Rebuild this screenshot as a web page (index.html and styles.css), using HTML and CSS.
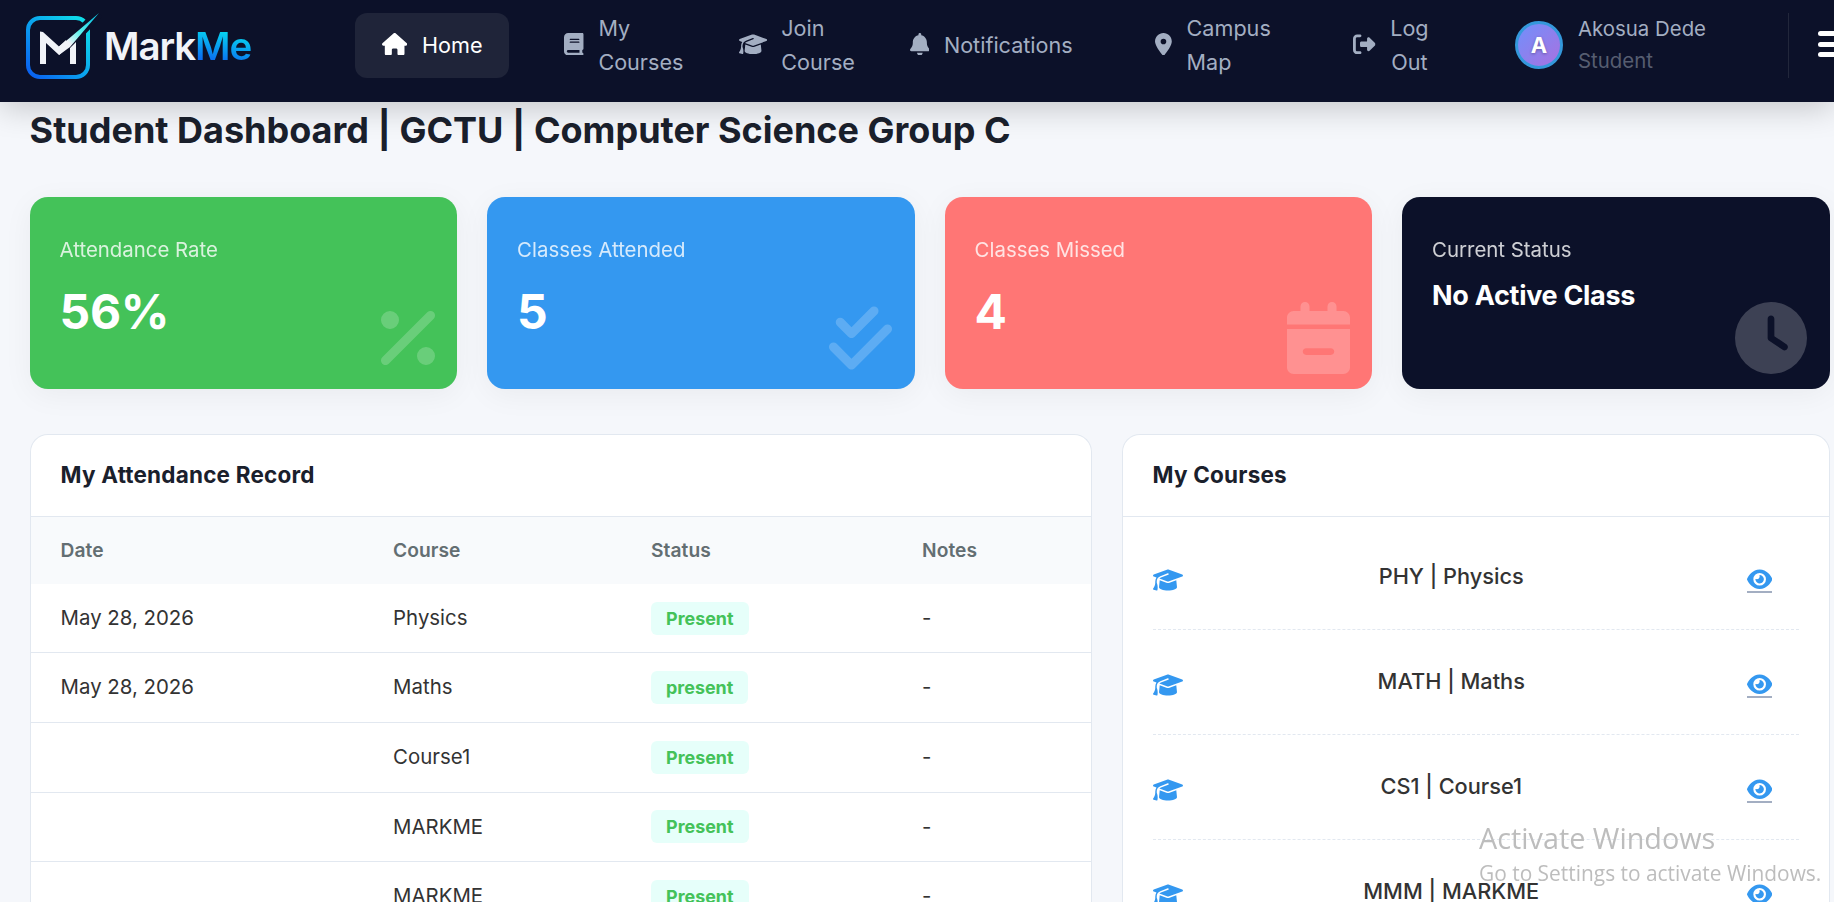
FILE: index.html
```html
<!DOCTYPE html>
<html lang="en">
<head>
<meta charset="utf-8">
<title>MarkMe | Student Dashboard</title>
<link rel="stylesheet" href="styles.css">
</head>
<body>
<svg class="sprite" aria-hidden="true">
  <symbol id="house" viewBox="0 0 576 512"><path d="M575.8 255.5c0 18-15 32.1-32 32.1h-32l.7 160.2c0 2.7-.2 5.4-.5 8.1V472c0 22.1-17.9 40-40 40H456c-1.1 0-2.2 0-3.3-.1c-1.4 .1-2.8 .1-4.2 .1H416 392c-22.1 0-40-17.9-40-40V448 384c0-17.7-14.3-32-32-32H256c-17.7 0-32 14.3-32 32v64 24c0 22.1-17.9 40-40 40H160 128.1c-1.5 0-3-.1-4.5-.2c-1.2 .1-2.4 .2-3.6 .2H104c-22.1 0-40-17.9-40-40V360c0-.9 0-1.9 .1-2.8V287.6H32c-18 0-32-14-32-32.1c0-9 3-17 10-24L266.4 8c7-7 15-8 22-8s15 2 21 7L564.8 231.5c8 7 12 15 11 24z"/></symbol>
  <symbol id="book" viewBox="0 0 448 512"><path d="M96 0C43 0 0 43 0 96V416c0 53 43 96 96 96H384h32c17.7 0 32-14.3 32-32s-14.3-32-32-32V384c17.7 0 32-14.3 32-32V32c0-17.7-14.3-32-32-32H384 96zm0 384H352v64H96c-17.7 0-32-14.3-32-32s14.3-32 32-32zm32-240c0-8.8 7.2-16 16-16H336c8.8 0 16 7.2 16 16s-7.2 16-16 16H144c-8.8 0-16-7.2-16-16zm16 48H336c8.8 0 16 7.2 16 16s-7.2 16-16 16H144c-8.8 0-16-7.2-16-16s7.2-16 16-16z"/></symbol>
  <symbol id="cap" viewBox="0 0 640 512"><path d="M320 32c-8.1 0-16.1 1.4-23.7 4.1L15.8 137.4C6.3 140.9 0 149.9 0 160s6.3 19.1 15.8 22.6l57.9 20.9C57.3 229.3 48 259.8 48 291.9v28.1c0 28.4-10.8 57.7-22.3 80.8c-6.5 13-13.9 25.8-22.5 37.6C0 442.7-.9 448.3 .9 453.4s6 8.9 11.2 10.2l64 16c4.2 1.1 8.7 .3 12.4-2s6.3-6.1 7.1-10.4c8.6-42.8 4.3-81.2-2.1-108.7C90.3 344.3 86 329.8 80 316.5V291.9c0-30.2 10.2-58.7 27.9-81.5c12.9-15.5 29.6-28 49.2-35.7l157-61.7c8.2-3.2 17.5 .8 20.7 9s-.8 17.5-9 20.7l-157 61.7c-12.4 4.9-23.3 12.4-32.2 21.6l159.6 57.6c7.6 2.7 15.6 4.1 23.7 4.1s16.1-1.4 23.7-4.1L624.2 182.6c9.5-3.4 15.8-12.5 15.8-22.6s-6.3-19.1-15.8-22.6L343.7 36.1C336.1 33.4 328.1 32 320 32zM128 408c0 35.3 86 72 192 72s192-36.7 192-72L496.7 262.6 354.5 314c-11.1 4-22.8 6-34.5 6s-23.5-2-34.5-6L143.3 262.6 128 408z"/></symbol>
  <symbol id="bell" viewBox="0 0 448 512"><path d="M224 0c-17.7 0-32 14.3-32 32V51.2C119 66 64 130.6 64 208v18.8c0 47-17.3 92.4-48.5 127.6l-7.4 8.3c-8.4 9.4-10.4 22.9-5.3 34.4S19.4 416 32 416H416c12.6 0 24-7.4 29.2-18.9s3.1-25-5.3-34.4l-7.4-8.3C401.3 319.2 384 273.9 384 226.8V208c0-77.4-55-142-128-156.8V32c0-17.7-14.3-32-32-32zm45.3 493.3c12-12 18.7-28.3 18.7-45.3H224 160c0 17 6.7 33.3 18.7 45.3s28.3 18.7 45.3 18.7s33.3-6.7 45.3-18.7z"/></symbol>
  <symbol id="pin" viewBox="0 0 384 512"><path d="M215.7 499.2C267 435 384 279.4 384 192C384 86 298 0 192 0S0 86 0 192c0 87.4 117 243 168.3 307.2c12.3 15.3 35.1 15.3 47.4 0zM192 128a64 64 0 1 1 0 128 64 64 0 1 1 0-128z"/></symbol>
  <symbol id="logout" viewBox="0 0 512 512"><path d="M377.9 105.9L500.7 228.7c7.2 7.2 11.3 17.1 11.3 27.3s-4.1 20.1-11.3 27.3L377.9 406.1c-6.4 6.4-15 9.9-24 9.9c-18.7 0-33.9-15.2-33.9-33.9l0-62.1-128 0c-17.7 0-32-14.3-32-32l0-64c0-17.7 14.3-32 32-32l128 0 0-62.1c0-18.7 15.2-33.9 33.9-33.9c9 0 17.6 3.6 24 9.9zM160 96L96 96c-17.7 0-32 14.3-32 32l0 256c0 17.7 14.3 32 32 32l64 0c17.7 0 32 14.3 32 32s-14.3 32-32 32l-64 0c-53 0-96-43-96-96L0 128C0 75 43 32 96 32l64 0c17.7 0 32 14.3 32 32s-14.3 32-32 32z"/></symbol>
  <symbol id="percent" viewBox="0 0 384 512"><path d="M374.6 118.6c12.5-12.5 12.5-32.8 0-45.3s-32.8-12.5-45.3 0l-320 320c-12.5 12.5-12.5 32.8 0 45.3s32.8 12.5 45.3 0l320-320zM128 128A64 64 0 1 0 0 128a64 64 0 1 0 128 0zM384 384a64 64 0 1 0 -128 0 64 64 0 1 0 128 0z"/></symbol>
  <symbol id="checks" viewBox="0 0 448 512"><path d="M342.6 86.6c12.5-12.5 12.5-32.8 0-45.3s-32.8-12.5-45.3 0L160 178.7l-57.4-57.4c-12.5-12.5-32.8-12.5-45.3 0s-12.5 32.8 0 45.3l80 80c12.5 12.5 32.8 12.5 45.3 0l160-160zm96 128c12.5-12.5 12.5-32.8 0-45.3s-32.8-12.5-45.3 0L160 402.7 54.6 297.4c-12.5-12.5-32.8-12.5-45.3 0s-12.5 32.8 0 45.3l128 128c12.5 12.5 32.8 12.5 45.3 0l256-256z"/></symbol>
  <symbol id="calendar" viewBox="0 0 448 512"><path d="M128 0c17.7 0 32 14.3 32 32V64H288V32c0-17.7 14.3-32 32-32s32 14.3 32 32V64h48c26.5 0 48 21.5 48 48v48H0V112C0 85.5 21.5 64 48 64H96V32c0-17.7 14.3-32 32-32zM0 192H448V464c0 26.5-21.5 48-48 48H48c-26.5 0-48-21.5-48-48V192zM312 376c13.3 0 24-10.7 24-24s-10.7-24-24-24H136c-13.3 0-24 10.7-24 24s10.7 24 24 24H312z"/></symbol>
  <symbol id="clock" viewBox="0 0 512 512"><path d="M256 0a256 256 0 1 1 0 512A256 256 0 1 1 256 0zM232 120V256c0 8 4 15.5 10.7 20l96 64c11 7.4 25.9 4.4 33.3-6.7s4.4-25.9-6.7-33.3L280 243.2V120c0-13.3-10.7-24-24-24s-24 10.7-24 24z"/></symbol>
  <symbol id="eye" viewBox="0 0 576 512"><path d="M288 32c-80.8 0-145.5 36.8-192.6 80.6C48.6 156 17.3 208 2.5 243.7c-3.3 7.9-3.3 16.7 0 24.6C17.3 304 48.6 356 95.4 399.4C142.5 443.2 207.2 480 288 480s145.5-36.8 192.6-80.6c46.8-43.5 78.1-95.4 93-131.1c3.3-7.9 3.3-16.7 0-24.6c-14.9-35.7-46.2-87.7-93-131.1C433.5 68.8 368.8 32 288 32zM144 256a144 144 0 1 1 288 0 144 144 0 1 1 -288 0zm144-64c0 35.3-28.7 64-64 64c-7.1 0-13.9-1.2-20.3-3.3c-5.5-1.8-11.9 1.6-11.7 7.4c.3 6.9 1.3 13.8 3.2 20.7c13.7 51.2 66.4 81.6 117.6 67.9s81.6-66.4 67.9-117.6c-11.1-41.5-47.8-69.4-88.6-71.1c-5.8-.2-9.2 6.1-7.4 11.7c2.1 6.4 3.3 13.2 3.3 20.3z"/></symbol>
</svg>

<header class="topbar">
  <a class="brand">
    <svg class="brand-mark" viewBox="0 0 78 70">
      <defs>
        <linearGradient id="frame" x1="0" y1="1" x2="1" y2="0"><stop offset="0" stop-color="#0a5cf0"/><stop offset=".5" stop-color="#0aa5ee"/><stop offset="1" stop-color="#10e4e8"/></linearGradient>
        <linearGradient id="tick" gradientUnits="userSpaceOnUse" x1="44" y1="32" x2="68" y2="8"><stop offset="0" stop-color="#f1f3f8"/><stop offset=".45" stop-color="#5cf2ec"/><stop offset="1" stop-color="#14cbe8"/></linearGradient>
      </defs>
      <rect x="4" y="8" width="60" height="59" rx="12" fill="none" stroke="url(#frame)" stroke-width="4"/>
      <path d="M34 45 75 3" stroke="#0c1129" stroke-width="10"/>
      <path fill="#f1f3f8" d="M16 54V21.5l3 .5L35 36.5 42 30 42 39 35 45 22 33V54zM46 54V38l6-6V54z"/>
      <path fill="url(#tick)" d="M35 36.5 45 28.5 75 3 46 37 35 45z"/>
    </svg>
    <span class="brand-name">Mark<span class="brand-accent">Me</span></span>
  </a>
  <a class="nav-item active"><svg class="i-home"><use href="#house"/></svg><span>Home</span></a>
  <a class="nav-item"><svg class="i-448"><use href="#book"/></svg><span>My<br>Courses</span></a>
  <a class="nav-item"><svg class="i-cap"><use href="#cap"/></svg><span>Join<br>Course</span></a>
  <a class="nav-item"><svg class="i-448"><use href="#bell"/></svg><span>Notifications</span></a>
  <a class="nav-item"><svg class="i-384"><use href="#pin"/></svg><span>Campus<br>Map</span></a>
  <a class="nav-item centered"><svg class="i-512"><use href="#logout"/></svg><span>Log<br>Out</span></a>
  <div class="profile">
    <div class="avatar">A</div>
    <div class="who"><div class="who-name">Akosua Dede</div><div class="who-role">Student</div></div>
  </div>
  <div class="menu"><div class="burger"><i></i><i></i><i></i></div></div>
</header>

<main class="content">
  <h1>Student Dashboard | GCTU | Computer Science Group C</h1>

  <section class="stats">
    <div class="stat green"><div class="label">Attendance Rate</div><div class="value">56%</div><svg class="s-384"><use href="#percent"/></svg></div>
    <div class="stat blue"><div class="label">Classes Attended</div><div class="value">5</div><svg class="s-448"><use href="#checks"/></svg></div>
    <div class="stat red"><div class="label">Classes Missed</div><div class="value">4</div><svg class="s-448"><use href="#calendar"/></svg></div>
    <div class="stat navy"><div class="label">Current Status</div><div class="value small">No Active Class</div><svg class="s-512"><use href="#clock"/></svg></div>
  </section>

  <section class="panels">
    <div class="panel">
      <h2>My Attendance Record</h2>
      <div class="row head"><span>Date</span><span>Course</span><span>Status</span><span>Notes</span></div>
      <div class="row"><span>May 28, 2026</span><span>Physics</span><span><b class="badge">Present</b></span><span>-</span></div>
      <div class="row"><span>May 28, 2026</span><span>Maths</span><span><b class="badge">present</b></span><span>-</span></div>
      <div class="row"><span></span><span>Course1</span><span><b class="badge">Present</b></span><span>-</span></div>
      <div class="row"><span></span><span>MARKME</span><span><b class="badge">Present</b></span><span>-</span></div>
      <div class="row"><span></span><span>MARKME</span><span><b class="badge">Present</b></span><span>-</span></div>
    </div>
    <div class="panel">
      <h2>My Courses</h2>
      <div class="courses">
        <div class="course"><svg class="c-cap"><use href="#cap"/></svg><span>PHY | Physics</span><a class="view"><svg><use href="#eye"/></svg></a></div>
        <div class="course"><svg class="c-cap"><use href="#cap"/></svg><span>MATH | Maths</span><a class="view"><svg><use href="#eye"/></svg></a></div>
        <div class="course"><svg class="c-cap"><use href="#cap"/></svg><span>CS1 | Course1</span><a class="view"><svg><use href="#eye"/></svg></a></div>
        <div class="course"><svg class="c-cap"><use href="#cap"/></svg><span>MMM | MARKME</span><a class="view"><svg><use href="#eye"/></svg></a></div>
      </div>
    </div>
  </section>
</main>

<div class="watermark"><div class="wm-title">Activate Windows</div><div class="wm-text">Go to Settings to activate Windows.</div></div>
</body>
</html>
```
FILE: styles.css
```css
* { box-sizing: border-box; }
html, body { height: 902px; overflow: hidden; }
body {
  margin: 0;
  background: #f5f7fb;
  color: #333;
  font-family: Inter, "Liberation Sans", sans-serif;
  line-height: 1.6;
}
.sprite { display: none; }
svg { display: block; flex: none; fill: currentColor; }

/* Top navigation */
.topbar {
  position: relative;
  z-index: 2;
  display: grid;
  grid-template-columns: 355px 182px 174.5px 171px 245.5px 198px 189px 273px 46px;
  align-items: center;
  height: 102px;
  padding-bottom: 11px;
  background: #0c1129;
  box-shadow: 0 6px 30px rgba(0, 0, 0, .2);
}
.brand { display: flex; align-items: center; padding-left: 24px; }
.brand-mark { width: 78px; height: 70px; margin-top: -2px; }
.brand-name {
  margin: 1px 0 0 2px;
  font-size: 38.5px;
  font-weight: 600;
  line-height: 50px;
  letter-spacing: -1.1px;
  color: #f1f3f8;
}
.brand-accent {
  background: linear-gradient(190deg, #06d3f0 25%, #0a6cf0 80%);
  -webkit-background-clip: text;
  background-clip: text;
  color: transparent;
}
.nav-item {
  display: flex;
  align-items: center;
  gap: 14.7px;
  height: 65px;
  padding-left: 27px;
  color: #a3aec2;
  font-size: 21.6px;
  line-height: 34px;
  white-space: nowrap;
}
.nav-item svg { height: 22.5px; margin-top: -3px; }
.nav-item span { margin-top: -2px; }
.nav-item.active {
  width: 154px;
  border-radius: 12px;
  background: #1f2439;
  color: #fff;
}
.nav-item.centered { text-align: center; }
.i-home { width: 25.3px; }
.i-448 { width: 19.7px; }
.i-cap { width: 28.1px; }
.i-384 { width: 16.9px; }
.i-512 { width: 22.5px; }
.profile { display: flex; align-items: center; gap: 15px; margin-top: -2px; }
.avatar {
  width: 48px;
  height: 48px;
  border: 3px solid #3498db;
  border-radius: 50%;
  background: linear-gradient(135deg, #7190fb, #a871e0);
  color: #fff;
  font-size: 22px;
  font-weight: 700;
  line-height: 43px;
  text-align: center;
  text-shadow: 0 1px 3px rgba(0, 0, 0, .3);
}
.who-name { color: #a3aec2; font-size: 20.4px; line-height: 33px; }
.who-role { color: #565d70; font-size: 20.4px; line-height: 32px; }
.menu { height: 65px; padding: 18px 0 0 29px; border-left: 1px solid #22273b; }
.burger { display: grid; gap: 5.5px; width: 30px; }
.burger i { height: 5px; border-radius: 3px; background: #fff; }

/* Page content */
.content { width: 1829.6px; padding-left: 29.6px; }
h1 {
  margin: 0 0 38px;
  font-size: 36px;
  font-weight: 700;
  line-height: 57px;
  color: #1a202c;
}
.stats { display: grid; grid-template-columns: repeat(4, 1fr); gap: 30px; margin-bottom: 45px; }
.stat {
  position: relative;
  height: 192px;
  padding: 36px 30px 0;
  border-radius: 18px;
  box-shadow: 0 6px 30px rgba(0, 0, 0, .05);
  color: #fff;
}
.green { background: #44c259; }
.blue { background: #3498f0; }
.red { background: #ff7675; }
.navy { background: #0c1129; }
.label { font-size: 20.4px; line-height: 33px; opacity: .8; }
.value { margin-top: 7px; font-size: 48px; font-weight: 700; line-height: 77px; letter-spacing: -.3px; }
.value.small { margin-top: 8px; font-size: 27px; line-height: 43px; }
.stat svg { position: absolute; right: 22.5px; bottom: 15px; height: 72px; opacity: .2; }
.s-384 { width: 54px; }
.s-448 { width: 63px; }
.s-512 { width: 72px; }

.panels { display: grid; grid-template-columns: 3fr 2fr; gap: 30px; }
.panel {
  height: 468px;
  border: 1px solid #e2e8f0;
  border-bottom: 0;
  border-radius: 18px 18px 0 0;
  background: #fff;
  overflow: hidden;
}
h2 {
  margin: 0;
  padding: 22px 30px 0;
  height: 82px;
  border-bottom: 1px solid #e2e8f0;
  font-size: 22.5px;
  font-weight: 700;
  line-height: 36px;
  letter-spacing: .2px;
  color: #1a202c;
}
.row {
  display: grid;
  grid-template-columns: 332.5px 258px 271px 1fr;
  align-items: center;
  height: 69.6px;
  padding-left: 30px;
  border-bottom: 1px solid #e2e8f0;
  font-size: 20.4px;
}
.row.head {
  height: 66.85px;
  border-bottom: 0;
  background: #f8fafc;
  color: #636e72;
  font-size: 19.2px;
  font-weight: 600;
  letter-spacing: .05px;
}
.badge {
  display: block;
  width: fit-content;
  padding: 0 15px;
  border-radius: 6px;
  background: #e6fffa;
  color: #44c259;
  font-size: 17.9px;
  font-weight: 700;
  line-height: 33px;
}
.courses { padding: 8px 30px 0; }
.course {
  display: flex;
  align-items: center;
  justify-content: space-between;
  height: 105px;
  border-bottom: 1px dashed #e2e8f0;
  font-size: 21.75px;
  font-weight: 500;
}
.course span { margin-top: -1px; }
.c-cap { width: 30px; height: 24px; margin-top: 6px; color: #3498f0; }
.view { padding: 0 26.4px 0 27px; color: #3498f0; }
.view svg { width: 25.3px; height: 24.5px; margin-top: 7px; border-bottom: 2px solid #a3aec2; }

/* System overlay */
.watermark {
  position: fixed;
  z-index: 3;
  left: 1479px;
  top: 817px;
  font-family: "Open Sans", "Noto Sans", sans-serif;
  color: #bdbdbd;
  white-space: nowrap;
}
.wm-title { font-size: 28.8px; line-height: 42px; }
.wm-text { font-size: 20.9px; line-height: 28px; }
```
